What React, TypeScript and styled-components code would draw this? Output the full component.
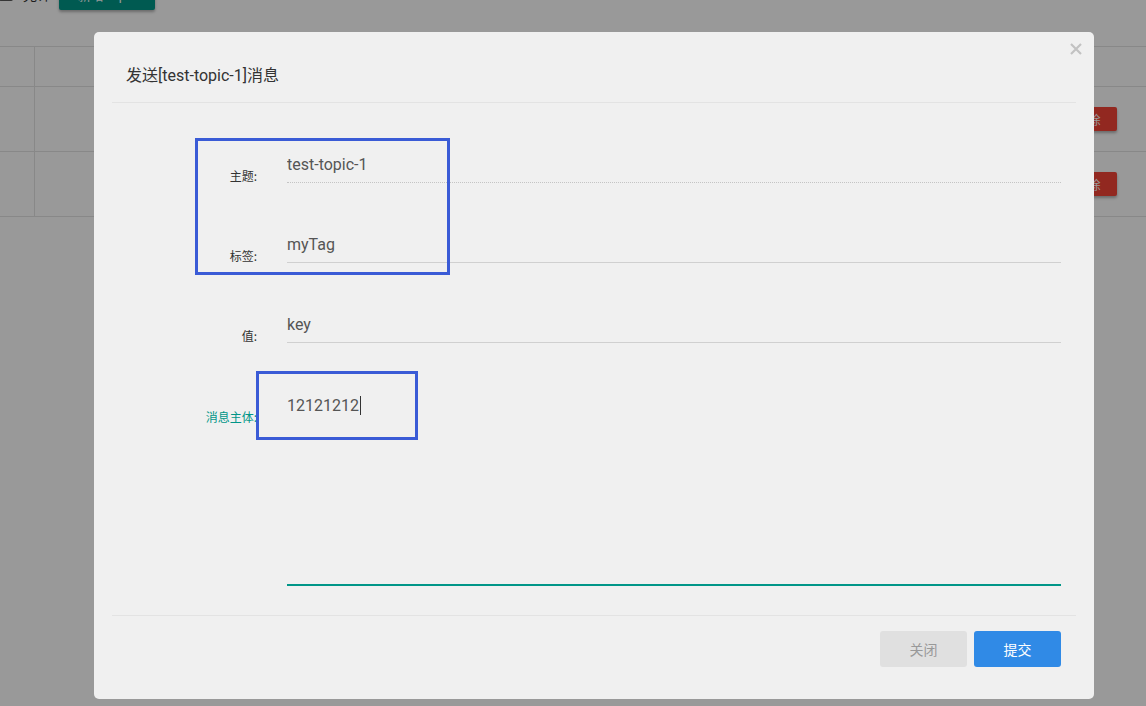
import React from "react";
import styled, { createGlobalStyle } from "styled-components";

const Global = createGlobalStyle`
  html, body { margin: 0; padding: 0; background: #fff; overflow: hidden; }
  body { font-family: Roboto, "Noto Sans CJK SC", sans-serif; }
  * { box-sizing: border-box; }
`;

const Page = styled.div`
  width: 1146px;
  height: 706px;
  overflow: hidden;
  position: relative;
  background: #fff;
`;

const TopBar = styled.div`
  display: flex;
  align-items: center;
  gap: 10px;
  height: 36px;
  margin-top: -24px;
`;

const Check = styled.span`
  width: 14px;
  height: 14px;
  border: 2px solid #5a5a5a;
  border-radius: 2px;
  margin-left: -1px;
`;

const TopText = styled.span`
  font-size: 14px;
  color: #333;
  margin-right: -2px;
`;

const GreenBtn = styled.div`
  width: 96px;
  height: 31px;
  background: #009688;
  color: #fff;
  border-radius: 2px;
  font-size: 13px;
  display: flex;
  align-items: center;
  justify-content: center;
  box-shadow: 0 2px 3px rgba(0,0,0,0.3);
`;

const Table = styled.div`
  margin-top: 34px;
  border-top: 1px solid #e3e3e3;
`;

const TRow = styled.div<{ $h: number }>`
  display: grid;
  grid-template-columns: 35px 1fr;
  height: ${p => p.$h}px;
  border-bottom: 1px solid #e3e3e3;
`;

const TCell = styled.div`
  border-right: 1px solid #e3e3e3;
`;

const TActions = styled.div`
  display: flex;
  align-items: center;
  justify-content: flex-end;
  padding-right: 29px;
`;

const RedBtn = styled.div`
  width: 57px;
  height: 24px;
  background: #f44336;
  color: #fff;
  font-size: 12px;
  border-radius: 2px;
  display: flex;
  align-items: center;
  justify-content: center;
  box-shadow: 0 2px 3px rgba(0,0,0,0.3);
`;

const Overlay = styled.div`
  position: absolute;
  inset: 0;
  background: rgba(0, 0, 0, 0.4);
`;

const Modal = styled.div`
  position: absolute;
  left: 94px;
  top: 32px;
  width: 1000px;
  height: 667px;
  background: #f0f0f0;
  border-radius: 5px;
  display: flex;
  flex-direction: column;
`;

const Close = styled.div`
  position: absolute;
  top: 9px;
  right: 10px;
  width: 16px;
  height: 16px;
  display: flex;
  align-items: center;
  justify-content: center;
`;

const Header = styled.div`
  margin: 0 18px;
  padding: 34px 14px 16px 14px;
  border-bottom: 1px solid #e3e3e3;
`;

const Title = styled.div`
  font-size: 16px;
  line-height: 20px;
  color: #333;
`;

const Body = styled.div`
  margin: 0 18px;
  padding: 43px 15px 29px 0;
  display: flex;
  flex-direction: column;
  gap: 43px;
  border-bottom: 1px solid #e3e3e3;
`;

const Row = styled.div<{ $top?: boolean }>`
  display: grid;
  grid-template-columns: 145px 1fr;
  column-gap: 30px;
  align-items: ${p => (p.$top ? "start" : "end")};
`;

const Label = styled.label<{ $active?: boolean; $pad?: number }>`
  font-size: 12px;
  line-height: 14px;
  text-align: right;
  color: ${p => (p.$active ? "#009688" : "#333")};
  font-family: "Noto Sans CJK SC", sans-serif;
  padding-top: ${p => p.$pad ?? 0}px;
`;

const Input = styled.input<{ $disabled?: boolean }>`
  width: 100%;
  height: 37px;
  margin: 0;
  padding: 0;
  border: none;
  border-bottom: 1px ${p => (p.$disabled ? "dotted #c4c4c4" : "solid #d0d0d0")};
  background: transparent;
  font-family: Roboto, sans-serif;
  font-size: 16px;
  color: #555;
  outline: none;
  line-height: 36px;
  padding-top: 1px;
`;

const TextArea = styled.div`
  height: 200px;
  padding: 10px 0;
  border-bottom: 2px solid #009688;
  font-family: Roboto, sans-serif;
  font-size: 16px;
  line-height: 18px;
  color: #555;
`;

const Caret = styled.span`
  display: inline-block;
  width: 1px;
  height: 19px;
  background: #333;
  vertical-align: -4px;
  margin-left: 1px;
`;

const Footer = styled.div`
  display: flex;
  justify-content: flex-end;
  gap: 7px;
  padding: 15px 33px 32px 0;
`;

const Btn = styled.button<{ $primary?: boolean }>`
  width: 87px;
  height: 36px;
  border: none;
  border-radius: 3px;
  font-family: "Noto Sans CJK SC", sans-serif;
  font-size: 14px;
  background: ${p => (p.$primary ? "#308ae6" : "#e0e0e0")};
  color: ${p => (p.$primary ? "#fff" : "#999")};
`;

const Mark = styled.div<{ $l: number; $t: number; $w: number; $h: number }>`
  position: absolute;
  left: ${p => p.$l}px;
  top: ${p => p.$t}px;
  width: ${p => p.$w}px;
  height: ${p => p.$h}px;
  border: 3px solid #3a5bd6;
  pointer-events: none;
`;

export default function App() {
  return (
    <Page>
      <Global />
      <TopBar>
        <Check />
        <TopText>允许</TopText>
        <GreenBtn>新增Topic</GreenBtn>
      </TopBar>
      <Table>
        <TRow $h={40}>
          <TCell />
          <div />
        </TRow>
        <TRow $h={65}>
          <TCell />
          <TActions>
            <RedBtn>删除</RedBtn>
          </TActions>
        </TRow>
        <TRow $h={65}>
          <TCell />
          <TActions>
            <RedBtn>删除</RedBtn>
          </TActions>
        </TRow>
      </Table>
      <Overlay />
      <Modal>
        <Close>
          <svg width="12" height="12" viewBox="0 0 12 12">
            <path d="M1 1 L11 11 M11 1 L1 11" stroke="#c2c2c2" strokeWidth="2.2" />
          </svg>
        </Close>
        <Header>
          <Title>发送[test-topic-1]消息</Title>
        </Header>
        <Body>
          <Row>
            <Label>主题:</Label>
            <Input $disabled readOnly value="test-topic-1" />
          </Row>
          <Row>
            <Label>标签:</Label>
            <Input readOnly value="myTag" />
          </Row>
          <Row>
            <Label>值:</Label>
            <Input readOnly value="key" />
          </Row>
          <Row $top>
            <Label $active $pad={24}>消息主体:</Label>
            <TextArea>
              12121212<Caret />
            </TextArea>
          </Row>
        </Body>
        <Footer>
          <Btn>关闭</Btn>
          <Btn $primary>提交</Btn>
        </Footer>
        <Mark $l={101} $t={106} $w={255} $h={137} />
        <Mark $l={162} $t={339} $w={162} $h={69} />
      </Modal>
    </Page>
  );
}
